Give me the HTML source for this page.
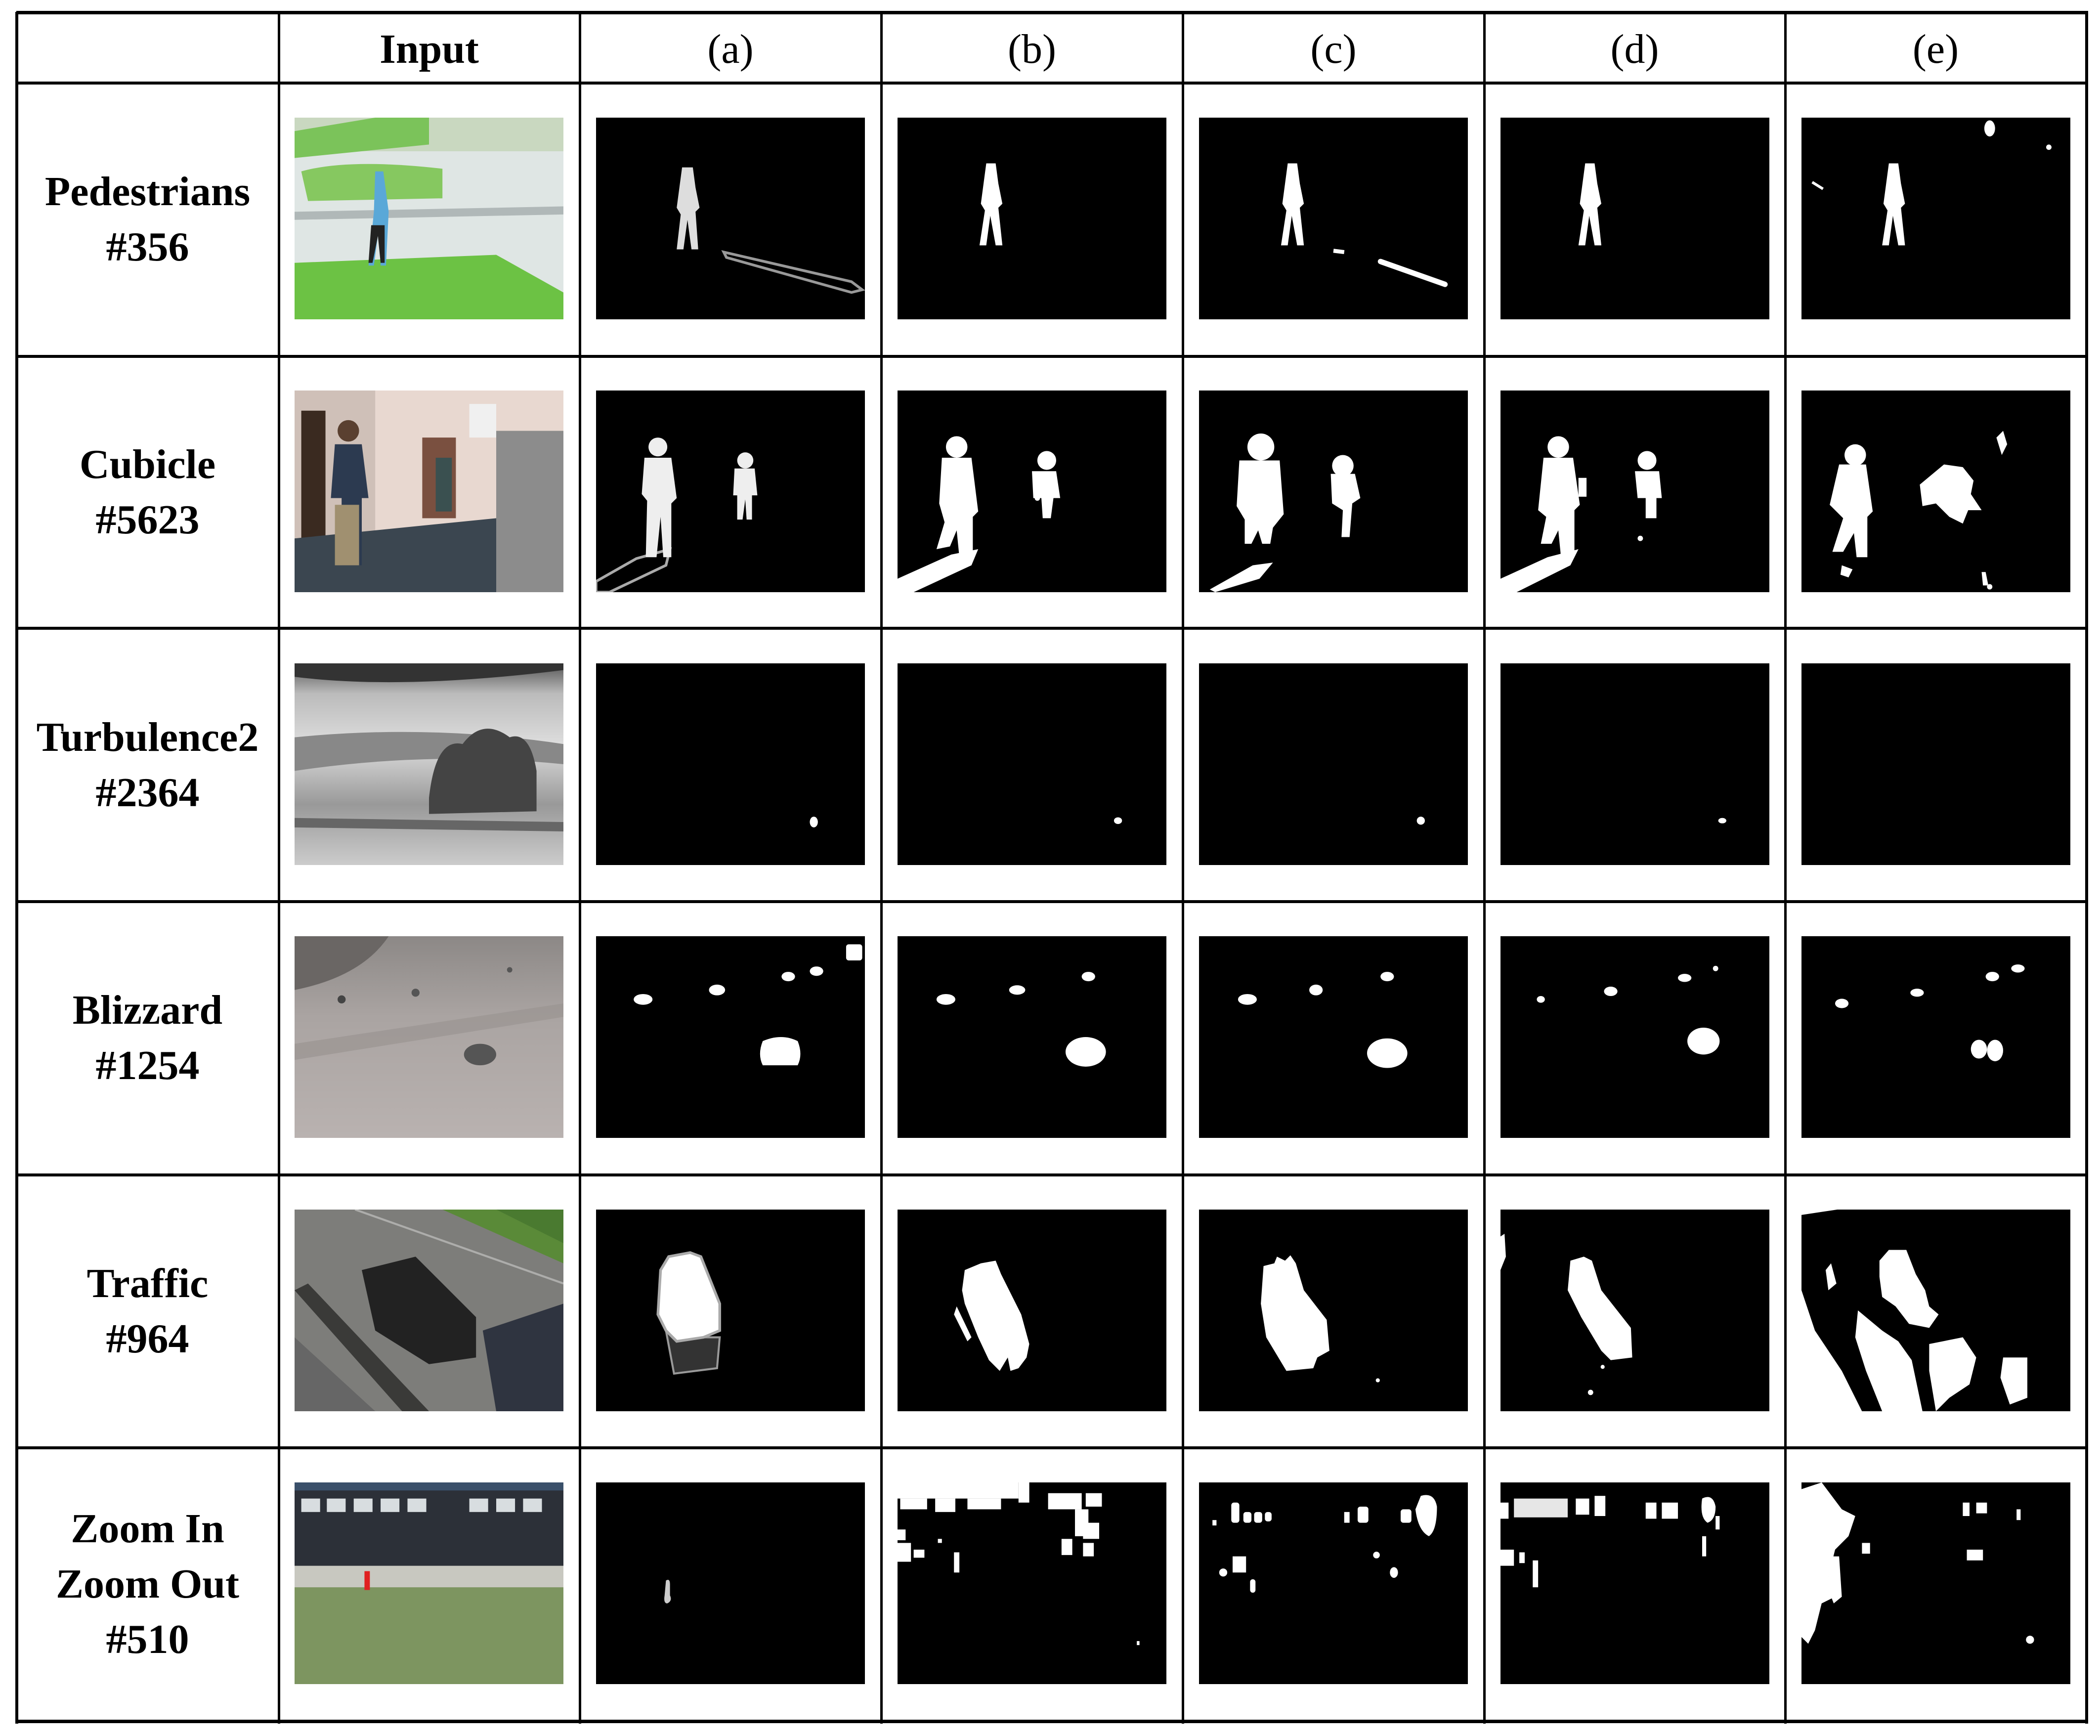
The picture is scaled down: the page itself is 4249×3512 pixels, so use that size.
<!DOCTYPE html>
<html><head><meta charset="utf-8"><style>
html,body{margin:0;padding:0;background:#fff;}
body{width:4249px;height:3512px;position:relative;overflow:hidden;font-family:"Liberation Serif",serif;}
.h{position:absolute;background:#000;height:6px;left:33px;width:4192px;}
.v{position:absolute;background:#000;width:5px;top:24px;height:3463px;}
.t{position:absolute;text-align:center;font-size:84px;line-height:112px;color:#000;}
.b{font-weight:bold;}
svg.m{position:absolute;width:544px;height:408px;}
</style></head><body>
<div class="h" style="top:22px;height:7px"></div>
<div class="h" style="top:165px"></div>
<div class="h" style="top:718px"></div>
<div class="h" style="top:1268px"></div>
<div class="h" style="top:1821px"></div>
<div class="h" style="top:2374px"></div>
<div class="h" style="top:2926px"></div>
<div class="h" style="top:3479px;height:7px"></div>
<div class="v" style="left:31px;width:6px"></div>
<div class="v" style="left:562px"></div>
<div class="v" style="left:1171px"></div>
<div class="v" style="left:1781px"></div>
<div class="v" style="left:2391px"></div>
<div class="v" style="left:3001px"></div>
<div class="v" style="left:3610px"></div>
<div class="v" style="left:4219px;width:6px"></div>

<div class="t b" style="left:564px;width:609px;top:44px">Input</div>
<div class="t" style="left:1173px;width:610px;top:44px">(a)</div>
<div class="t" style="left:1783px;width:610px;top:44px">(b)</div>
<div class="t" style="left:2393px;width:610px;top:44px">(c)</div>
<div class="t" style="left:3003px;width:609px;top:44px">(d)</div>
<div class="t" style="left:3612px;width:609px;top:44px">(e)</div>

<div class="t b" style="left:33px;width:531px;top:332px">Pedestrians<br>#356</div>
<div class="t b" style="left:33px;width:531px;top:884px">Cubicle<br>#5623</div>
<div class="t b" style="left:33px;width:531px;top:1436px">Turbulence2<br>#2364</div>
<div class="t b" style="left:33px;width:531px;top:1988px">Blizzard<br>#1254</div>
<div class="t b" style="left:33px;width:531px;top:2541px">Traffic<br>#964</div>
<div class="t b" style="left:33px;width:531px;top:3037px">Zoom In<br>Zoom Out<br>#510</div>

<!-- Row 1 Pedestrians -->
<svg class="m" style="left:596px;top:238px" viewBox="0 0 200 150" preserveAspectRatio="none">
<rect width="200" height="150" fill="#dfe6e4"/><rect y="0" width="200" height="25" fill="#c9d8c0"/>
<path d="M0 10 L60 0 L100 0 L100 20 L0 30Z" fill="#7bc35a"/>
<path d="M5 40 Q40 30 110 38 L110 60 L10 62Z" fill="#86c860"/>
<path d="M0 70 L200 66 L200 72 L0 76Z" fill="#b0b8b8"/>
<path d="M0 108 L150 102 L200 130 L200 150 L0 150Z" fill="#6cc244"/>
<path d="M60 40 l6 0 l4 30 l-2 40 l-4 0 l-1 -30 l-4 30 l-4 0 l4 -40z" fill="#5aa8d8"/>
<path d="M57 80 l10 0 l0 28 l-3 0 l-2 -20 l-4 20 l-3 0z" fill="#222"/>
</svg>
<svg class="m" style="left:1206px;top:238px" viewBox="0 0 200 150" preserveAspectRatio="none"><rect width="200" height="150"/>
<path d="M64 37 h8 l2 15 l3 15 l-3 3 l2 28 h-5 l-3 -22 l-3 22 h-5 l3 -26 l-3 -5 l2 -15z" fill="#ddd"/>
<path d="M95 100 L190 122 L198 128 L190 130 L97 104Z" fill="none" stroke="#999" stroke-width="2"/></svg>
<svg class="m" style="left:1816px;top:238px" viewBox="0 0 200 150" preserveAspectRatio="none"><rect width="200" height="150"/>
<path d="M66 34 h7 l2 15 l3 15 l-3 3 l3 28 h-5 l-4 -22 l-3 22 h-5 l4 -26 l-3 -5 l2 -15z" fill="#fff"/></svg>
<svg class="m" style="left:2426px;top:238px" viewBox="0 0 200 150" preserveAspectRatio="none"><rect width="200" height="150"/>
<path d="M66 34 h7 l2 15 l3 15 l-3 3 l3 28 h-5 l-4 -22 l-3 22 h-5 l4 -26 l-3 -5 l2 -15z" fill="#fff"/>
<path d="M100 99 l8 1" stroke="#fff" stroke-width="3"/><path d="M135 107 L183 124" stroke="#fff" stroke-width="4" stroke-linecap="round"/></svg>
<svg class="m" style="left:3036px;top:238px" viewBox="0 0 200 150" preserveAspectRatio="none"><rect width="200" height="150"/>
<path d="M63 34 h7 l2 15 l3 15 l-3 3 l3 28 h-5 l-4 -22 l-3 22 h-5 l4 -26 l-3 -5 l2 -15z" fill="#fff"/></svg>
<svg class="m" style="left:3645px;top:238px" viewBox="0 0 200 150" preserveAspectRatio="none"><rect width="200" height="150"/>
<path d="M65 34 h7 l2 15 l3 15 l-3 3 l3 28 h-5 l-4 -22 l-3 22 h-5 l4 -26 l-3 -5 l2 -15z" fill="#fff"/>
<ellipse cx="140" cy="8" rx="4" ry="6" fill="#fff"/><circle cx="184" cy="22" r="2" fill="#fff"/><path d="M8 48 l8 5" stroke="#fff" stroke-width="2"/></svg>

<!-- Row 2 Cubicle -->
<svg class="m" style="left:596px;top:790px" viewBox="0 0 200 150" preserveAspectRatio="none">
<rect width="200" height="150" fill="#e8d8d0"/><rect x="0" width="60" height="150" fill="#cfc0b8"/>
<rect x="5" y="15" width="18" height="100" fill="#3a2a20"/><rect x="95" y="35" width="25" height="60" fill="#7a5040"/>
<rect x="150" y="30" width="50" height="120" fill="#8c8c8c"/><rect x="130" y="10" width="20" height="25" fill="#f0f0f0"/>
<path d="M0 110 L150 95 L150 150 L0 150Z" fill="#3b4650"/>
<path d="M30 40 h20 l5 40 l-5 0 l0 50 h-15 l0 -50 l-8 0z" fill="#2c3a50"/><circle cx="40" cy="30" r="8" fill="#5a4030"/>
<path d="M30 85 h18 l0 45 h-18z" fill="#a09070"/><path d="M105 50 h12 v40 h-12z" fill="#3a5050"/></svg>
<svg class="m" style="left:1206px;top:790px" viewBox="0 0 200 150" preserveAspectRatio="none"><rect width="200" height="150"/>
<path d="M0 150 L0 142 L30 125 L55 118 L52 130 L10 150Z" fill="none" stroke="#aaa" stroke-width="2"/>
<circle cx="46" cy="42" r="7" fill="#eee"/><path d="M36 50 h20 l4 30 l-4 4 l0 40 h-6 l-2 -30 l-3 30 h-8 l1 -42 l-4 -5z" fill="#eee"/>
<circle cx="111" cy="52" r="6" fill="#eee"/><path d="M103 58 h15 l2 20 l-4 0 l0 18 h-4 l-1 -15 l-2 15 h-4 l0 -18 l-3 0z" fill="#eee"/></svg>
<svg class="m" style="left:1816px;top:790px" viewBox="0 0 200 150" preserveAspectRatio="none"><rect width="200" height="150"/>
<path d="M0 150 L0 140 L40 122 L60 118 L55 130 L12 150Z" fill="#fff"/>
<circle cx="44" cy="42" r="8" fill="#fff"/><path d="M33 50 h22 l5 40 l-4 4 l0 30 h-10 l-2 -20 l-5 12 l-10 2 l6 -20 l-4 -14z" fill="#fff"/>
<circle cx="111" cy="52" r="7" fill="#fff"/><path d="M100 60 h18 l3 20 l-5 0 l-2 15 h-6 l-1 -15 l-6 0z" fill="#fff"/><circle cx="104" cy="80" r="2" fill="#fff"/></svg>
<svg class="m" style="left:2426px;top:790px" viewBox="0 0 200 150" preserveAspectRatio="none"><rect width="200" height="150"/>
<path d="M8 148 L40 130 L55 128 L45 140 L12 150Z" fill="#fff"/>
<circle cx="46" cy="42" r="10" fill="#fff"/><path d="M30 52 h30 l3 40 l-8 10 l-2 12 h-6 l-3 -10 l-5 10 h-5 l0 -18 l-6 -10z" fill="#fff"/>
<circle cx="107" cy="56" r="8" fill="#fff"/><path d="M98 62 h18 l4 18 l-6 4 l-2 25 h-6 l1 -20 l-8 -5z" fill="#fff"/></svg>
<svg class="m" style="left:3036px;top:790px" viewBox="0 0 200 150" preserveAspectRatio="none"><rect width="200" height="150"/>
<path d="M0 150 L0 140 L35 124 L58 118 L52 130 L12 150Z" fill="#fff"/>
<circle cx="43" cy="42" r="8" fill="#fff"/><path d="M32 50 h22 l5 35 l-4 4 l0 35 h-10 l-2 -20 l-5 10 h-8 l4 -20 l-6 -5z" fill="#fff"/>
<path d="M58 65 l6 0 l0 14 l-6 0z" fill="#fff"/>
<circle cx="109" cy="52" r="7" fill="#fff"/><path d="M100 60 h18 l2 20 l-4 0 l0 15 h-8 l0 -15 l-6 0z" fill="#fff"/><circle cx="104" cy="110" r="2" fill="#fff"/></svg>
<svg class="m" style="left:3645px;top:790px" viewBox="0 0 200 150" preserveAspectRatio="none"><rect width="200" height="150"/>
<circle cx="40" cy="48" r="8" fill="#fff"/><path d="M28 55 h20 l5 35 l-4 4 l0 30 h-8 l-2 -18 l-8 14 h-8 l8 -25 l-10 -10z" fill="#fff"/>
<path d="M30 130 l8 3 l-3 6 l-6 -2z" fill="#fff"/><path d="M145 35 l5 -5 l3 10 l-4 8z" fill="#fff"/>
<path d="M88 70 l18 -15 l14 2 l8 10 l-2 10 l8 12 l-10 0 l-4 10 l-10 -5 l-10 -10 l-10 2z" fill="#fff"/>
<path d="M134 135 l3 0 l2 10 l-4 0z" fill="#fff"/><circle cx="140" cy="146" r="2" fill="#fff"/></svg>

<!-- Row 3 Turbulence -->
<svg class="m" style="left:596px;top:1342px" viewBox="0 0 200 150" preserveAspectRatio="none">
<defs><linearGradient id="tg" x1="0" y1="0" x2="0" y2="1"><stop offset="0" stop-color="#555"/><stop offset="0.15" stop-color="#bbb"/><stop offset="0.4" stop-color="#ddd"/><stop offset="0.7" stop-color="#999"/><stop offset="1" stop-color="#ccc"/></linearGradient></defs>
<rect width="200" height="150" fill="url(#tg)"/><path d="M0 10 Q80 20 200 5 L200 0 L0 0Z" fill="#333"/>
<path d="M0 55 Q100 45 200 60 L200 75 Q100 65 0 80Z" fill="#888"/>
<path d="M100 100 Q105 55 125 60 Q140 40 160 55 Q175 50 180 80 L180 110 L100 112Z" fill="#444"/>
<path d="M0 115 L200 118 L200 125 L0 122Z" fill="#666"/></svg>
<svg class="m" style="left:1206px;top:1342px" viewBox="0 0 200 150" preserveAspectRatio="none"><rect width="200" height="150"/><ellipse cx="162" cy="118" rx="3" ry="4" fill="#fff"/></svg>
<svg class="m" style="left:1816px;top:1342px" viewBox="0 0 200 150" preserveAspectRatio="none"><rect width="200" height="150"/><ellipse cx="164" cy="117" rx="3" ry="2.5" fill="#fff"/></svg>
<svg class="m" style="left:2426px;top:1342px" viewBox="0 0 200 150" preserveAspectRatio="none"><rect width="200" height="150"/><ellipse cx="165" cy="117" rx="3" ry="3" fill="#fff"/></svg>
<svg class="m" style="left:3036px;top:1342px" viewBox="0 0 200 150" preserveAspectRatio="none"><rect width="200" height="150"/><ellipse cx="165" cy="117" rx="3" ry="2" fill="#fff"/></svg>
<svg class="m" style="left:3645px;top:1342px" viewBox="0 0 200 150" preserveAspectRatio="none"><rect width="200" height="150"/></svg>

<!-- Row 4 Blizzard -->
<svg class="m" style="left:596px;top:1894px" viewBox="0 0 200 150" preserveAspectRatio="none">
<defs><linearGradient id="bg" x1="0" y1="0" x2="0" y2="1"><stop offset="0" stop-color="#8c8886"/><stop offset="0.4" stop-color="#aaa4a2"/><stop offset="1" stop-color="#b9b2b0"/></linearGradient></defs>
<rect width="200" height="150" fill="url(#bg)"/><path d="M0 0 L70 0 Q50 30 0 40Z" fill="#6a6664"/>
<path d="M0 80 L200 50 L200 60 L0 92Z" fill="#9a9492" opacity="0.7"/><ellipse cx="138" cy="88" rx="12" ry="8" fill="#555"/>
<circle cx="35" cy="47" r="3" fill="#444"/><circle cx="90" cy="42" r="3" fill="#555"/><circle cx="160" cy="25" r="2" fill="#555"/></svg>
<svg class="m" style="left:1206px;top:1894px" viewBox="0 0 200 150" preserveAspectRatio="none"><rect width="200" height="150"/><g fill="#fff">
<ellipse cx="35" cy="47" rx="7" ry="4"/><ellipse cx="90" cy="40" rx="6" ry="4"/><ellipse cx="143" cy="30" rx="5" ry="3.5"/><ellipse cx="164" cy="26" rx="5" ry="3.5"/><rect x="186" y="6" width="12" height="12" rx="2"/><path d="M124 78 q14 -6 26 0 q4 10 0 18 h-26 q-4 -8 0 -18z"/></g></svg>
<svg class="m" style="left:1816px;top:1894px" viewBox="0 0 200 150" preserveAspectRatio="none"><rect width="200" height="150"/><g fill="#fff">
<ellipse cx="36" cy="47" rx="7" ry="4"/><ellipse cx="89" cy="40" rx="6" ry="3.5"/><ellipse cx="142" cy="30" rx="5" ry="3.5"/><ellipse cx="140" cy="86" rx="15" ry="11"/></g></svg>
<svg class="m" style="left:2426px;top:1894px" viewBox="0 0 200 150" preserveAspectRatio="none"><rect width="200" height="150"/><g fill="#fff">
<ellipse cx="36" cy="47" rx="7" ry="4"/><ellipse cx="87" cy="40" rx="5" ry="4"/><ellipse cx="140" cy="30" rx="5" ry="3.5"/><ellipse cx="140" cy="87" rx="15" ry="11"/></g></svg>
<svg class="m" style="left:3036px;top:1894px" viewBox="0 0 200 150" preserveAspectRatio="none"><rect width="200" height="150"/><g fill="#fff">
<ellipse cx="30" cy="47" rx="3" ry="2.5"/><ellipse cx="82" cy="41" rx="5" ry="3.5"/><ellipse cx="137" cy="31" rx="5" ry="3"/><circle cx="160" cy="24" r="2"/><ellipse cx="151" cy="78" rx="12" ry="10"/></g></svg>
<svg class="m" style="left:3645px;top:1894px" viewBox="0 0 200 150" preserveAspectRatio="none"><rect width="200" height="150"/><g fill="#fff">
<ellipse cx="30" cy="50" rx="5" ry="3.5"/><ellipse cx="86" cy="42" rx="5" ry="3"/><ellipse cx="142" cy="30" rx="5" ry="3.5"/><ellipse cx="161" cy="24" rx="5" ry="3"/><ellipse cx="132" cy="84" rx="6" ry="7"/><ellipse cx="144" cy="85" rx="6" ry="8"/></g></svg>

<!-- Row 5 Traffic -->
<svg class="m" style="left:596px;top:2447px" viewBox="0 0 200 150" preserveAspectRatio="none">
<rect width="200" height="150" fill="#7d7d7a"/><path d="M110 0 L200 0 L200 40 Z" fill="#5a8a38"/><path d="M150 0 L200 0 L200 25Z" fill="#4a7a30"/>
<path d="M0 60 L10 55 L100 150 L80 150 Z" fill="#3a3a38"/><path d="M0 95 L60 150 L0 150Z" fill="#666"/>
<path d="M140 90 L200 70 L200 150 L150 150Z" fill="#2f3440"/>
<path d="M50 45 L90 35 L135 80 L135 110 L100 115 L60 90Z" fill="#222"/>
<path d="M45 0 L200 55" stroke="#ddd" stroke-width="1.5" opacity="0.5"/></svg>
<svg class="m" style="left:1206px;top:2447px" viewBox="0 0 200 150" preserveAspectRatio="none"><rect width="200" height="150"/>
<path d="M48 80 L52 90 L58 122 L90 118 L92 95 L80 95 Z" fill="#333" stroke="#999" stroke-width="1.5"/>
<path d="M54 35 L70 32 L78 35 L88 60 L92 70 L92 90 L80 95 L60 98 L52 90 L46 78 L48 45Z" fill="#fff" stroke="#aaa" stroke-width="2"/></svg>
<svg class="m" style="left:1816px;top:2447px" viewBox="0 0 200 150" preserveAspectRatio="none"><rect width="200" height="150"/>
<path d="M50 45 L62 40 L73 38 L77 48 L92 78 L98 100 L96 110 L90 118 L84 120 L82 110 L76 120 L68 112 L60 95 L50 70 L48 60Z" fill="#fff"/>
<path d="M44 72 L55 95 L52 98 L42 78Z" fill="#fff"/></svg>
<svg class="m" style="left:2426px;top:2447px" viewBox="0 0 200 150" preserveAspectRatio="none"><rect width="200" height="150"/>
<path d="M48 42 L56 40 L58 35 L64 38 L68 34 L72 40 L78 60 L95 82 L97 105 L88 110 L85 118 L65 120 L50 95 L46 70Z" fill="#fff"/><circle cx="133" cy="127" r="1.5" fill="#fff"/></svg>
<svg class="m" style="left:3036px;top:2447px" viewBox="0 0 200 150" preserveAspectRatio="none"><rect width="200" height="150"/>
<path d="M52 38 L62 35 L68 38 L75 60 L97 88 L98 110 L82 112 L75 105 L60 80 L50 60Z" fill="#fff"/>
<path d="M0 20 L3 18 L4 35 L0 45Z" fill="#fff"/><circle cx="67" cy="136" r="2" fill="#fff"/><circle cx="76" cy="117" r="1.5" fill="#fff"/></svg>
<svg class="m" style="left:3645px;top:2447px" viewBox="0 0 200 150" preserveAspectRatio="none"><rect width="200" height="150"/>
<path d="M0 0 L10 0 L40 -2 L0 4Z" fill="#fff"/>
<path d="M58 38 L65 30 L78 30 L85 48 L92 60 L95 72 L102 78 L95 88 L80 85 L70 72 L60 65 L58 50Z" fill="#fff"/>
<path d="M0 60 L10 90 L30 120 L45 150 L0 150Z" fill="#fff"/>
<path d="M42 75 L60 90 L72 98 L82 112 L90 150 L60 150 L48 120 L40 95Z" fill="#fff"/>
<path d="M95 100 L120 95 L130 110 L125 130 L110 140 L100 150 L95 120Z" fill="#fff"/>
<path d="M150 110 L168 110 L168 140 L155 145 L148 125Z" fill="#fff"/>
<path d="M18 45 L22 40 L26 55 L20 60Z" fill="#fff"/></svg>

<!-- Row 6 Zoom -->
<svg class="m" style="left:596px;top:2999px" viewBox="0 0 200 150" preserveAspectRatio="none">
<rect width="200" height="150" fill="#7d9560"/><rect width="200" height="70" fill="#2c3038"/>
<rect width="200" height="6" fill="#3a506a"/><rect y="62" width="200" height="16" fill="#c8c8c0"/>
<g fill="#d8dde0"><rect x="5" y="12" width="14" height="10"/><rect x="24" y="12" width="14" height="10"/><rect x="44" y="12" width="14" height="10"/><rect x="64" y="12" width="14" height="10"/><rect x="84" y="12" width="14" height="10"/><rect x="130" y="12" width="14" height="10"/><rect x="150" y="12" width="14" height="10"/><rect x="170" y="12" width="14" height="10"/></g>
<rect x="52" y="66" width="4" height="14" fill="#e02020"/></svg>
<svg class="m" style="left:1206px;top:2999px" viewBox="0 0 200 150" preserveAspectRatio="none"><rect width="200" height="150"/><path d="M52 73 q3 -2 3 3 l0 8 q2 4 -2 6 q-3 0 -2 -6z" fill="#ccc"/></svg>
<svg class="m" style="left:1816px;top:2999px" viewBox="0 0 200 150" preserveAspectRatio="none"><rect width="200" height="150"/><g fill="#fff">
<rect x="0" y="0" width="90" height="12"/><rect x="2" y="12" width="20" height="8"/><rect x="28" y="12" width="15" height="10"/><rect x="52" y="12" width="25" height="8"/><rect x="90" y="0" width="8" height="15"/>
<rect x="112" y="8" width="25" height="12"/><rect x="140" y="8" width="12" height="10"/><rect x="132" y="20" width="10" height="20"/><rect x="138" y="30" width="12" height="12"/>
<rect x="0" y="35" width="6" height="8"/><rect x="0" y="45" width="10" height="14"/><rect x="12" y="50" width="8" height="6"/><rect x="30" y="42" width="3" height="3"/><rect x="42" y="52" width="4" height="15"/><rect x="122" y="42" width="8" height="12"/><rect x="138" y="45" width="8" height="10"/><rect x="178" y="118" width="2" height="3"/></g></svg>
<svg class="m" style="left:2426px;top:2999px" viewBox="0 0 200 150" preserveAspectRatio="none"><rect width="200" height="150"/><g fill="#fff">
<rect x="24" y="15" width="6" height="15" rx="2"/><rect x="33" y="22" width="6" height="8" rx="2"/><rect x="41" y="22" width="6" height="8" rx="2"/><rect x="49" y="22" width="5" height="7" rx="2"/><rect x="10" y="28" width="3" height="4"/>
<rect x="108" y="22" width="4" height="8"/><rect x="118" y="18" width="8" height="12" rx="2"/><path d="M165 10 q10 -3 12 8 q0 18 -6 22 q-8 -4 -10 -20z"/><rect x="150" y="20" width="8" height="10" rx="2"/>
<rect x="25" y="55" width="10" height="12"/><circle cx="18" cy="67" r="3"/><rect x="38" y="72" width="4" height="10" rx="2"/><circle cx="132" cy="54" r="2.5"/><ellipse cx="145" cy="67" rx="3" ry="4"/></g></svg>
<svg class="m" style="left:3036px;top:2999px" viewBox="0 0 200 150" preserveAspectRatio="none"><rect width="200" height="150"/><g fill="#fff">
<rect x="0" y="15" width="6" height="12"/><rect x="10" y="12" width="40" height="14" opacity="0.9"/><rect x="56" y="12" width="10" height="12"/><rect x="70" y="10" width="8" height="15"/>
<rect x="108" y="15" width="8" height="12"/><rect x="120" y="15" width="12" height="12"/><path d="M150 12 q8 -4 10 6 q0 10 -6 12 q-6 -4 -4 -18z"/><rect x="160" y="25" width="3" height="10"/>
<rect x="0" y="50" width="10" height="12"/><rect x="14" y="52" width="4" height="8"/><rect x="24" y="58" width="4" height="20"/><rect x="150" y="40" width="3" height="15"/></g></svg>
<svg class="m" style="left:3645px;top:2999px" viewBox="0 0 200 150" preserveAspectRatio="none"><rect width="200" height="150"/><g fill="#fff">
<path d="M0 5 L15 0 L30 20 L40 25 L35 40 L25 50 L20 70 L25 85 L15 90 L10 110 L5 120 L0 115Z"/><path d="M20 55 l8 0 l2 30 l-6 5 l-4 -10z"/>
<rect x="45" y="45" width="6" height="8"/><rect x="120" y="15" width="5" height="10"/><rect x="130" y="15" width="8" height="8"/><rect x="160" y="20" width="3" height="8"/>
<rect x="123" y="50" width="12" height="8"/><circle cx="170" cy="117" r="3"/></g></svg>
</body></html>
